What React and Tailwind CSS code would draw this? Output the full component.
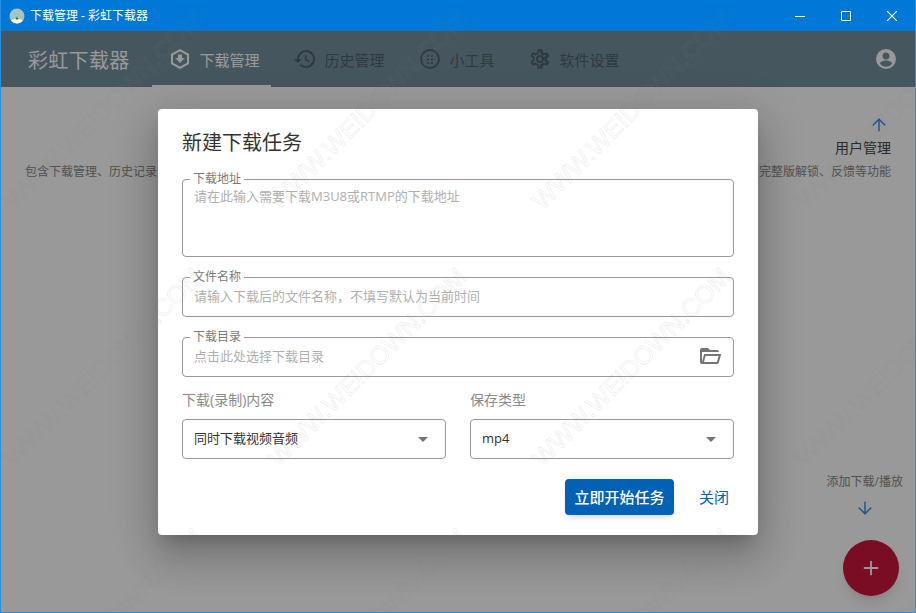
import React from "react";
import { ArrowUp, ArrowDown, Plus } from "lucide-react";

const FONT = "font-['Open_Sans','Noto_Sans_CJK_SC',sans-serif]";

// repeated site watermark, sits on top of the whole page
const marks = [];
[110, 367, 627].forEach((cy) => {
  [102, 366, 630, 894].forEach((cx) => marks.push([cx - 140, cy - 16]));
});

function TabItem({ icon, label, active }) {
  return (
    <div className={`relative flex h-14 items-center gap-2 pl-4 pr-[11px] ${active ? "text-white" : "text-[#4e626c]"}`}>
      {icon}
      <span className="pt-[2px] text-[15px]">{label}</span>
      {active && <div className="absolute bottom-0 left-0 h-[2px] w-full bg-white" />}
    </div>
  );
}

function OutlinedField({ label, placeholder, height, pad, children }) {
  return (
    <fieldset className={`rounded border border-[#999] px-[11px] ${height} ${pad}`}>
      <legend className="-ml-[4px] px-[3px] text-xs leading-none text-[#7a7a7a]">{label}</legend>
      <div className="flex h-5 items-center justify-between">
        <span className="text-[13px] leading-5 text-[#b0b0b0]">{placeholder}</span>
        {children}
      </div>
    </fieldset>
  );
}

function SelectBox({ label, value }) {
  return (
    <div className="flex-1">
      <div className="mb-[9px] text-sm leading-5 text-[#8a8a8a]">{label}</div>
      <div className="flex h-10 items-center justify-between rounded border border-[#999] pl-[11px] pr-[17px]">
        <span className="text-[13px] text-[#333]">{value}</span>
        <div className="h-0 w-0 border-x-[5px] border-t-[5px] border-x-transparent border-t-[#757575]" />
      </div>
    </div>
  );
}

export default function App() {
  return (
    <div className={`relative flex h-[613px] w-[916px] flex-col overflow-hidden border-x border-b border-[#2b8fe0] ${FONT}`}>
      {/* title bar */}
      <div className="flex h-[31px] shrink-0 items-center justify-between bg-[#0078d7] pl-2 text-white">
        <div className="flex items-center gap-[5px]">
          <svg width="16" height="16" viewBox="0 0 16 16">
            <circle cx="8" cy="8" r="7.5" fill="#a9c4bd" />
            <path d="M2 12.5a7.5 7.5 0 0 0 12 0c-1.5-1-3-1.5-6-1.5s-4.500.5-6 1.500z" fill="#fff" />
            <path d="M6.500 11.500 8 8.500l1.500 3z" fill="#3d5a50" />
          </svg>
          <span className="text-xs">下载管理 - 彩虹下载器</span>
        </div>
        <div className="flex items-center">
          <div className="flex h-[31px] w-[46px] items-center justify-center">
            <svg width="10" height="10" viewBox="0 0 10 10"><path d="M0 5.500h10" stroke="#fff" /></svg>
          </div>
          <div className="flex h-[31px] w-[46px] items-center justify-center">
            <svg width="10" height="10" viewBox="0 0 10 10"><path d="M.5.500h9v9h-9z" fill="none" stroke="#fff" /></svg>
          </div>
          <div className="flex h-[31px] w-[46px] items-center justify-center">
            <svg width="10" height="10" viewBox="0 0 10 10"><path d="M0 0l10 10M10 0 0 10" stroke="#fff" strokeWidth="1.1" /></svg>
          </div>
        </div>
      </div>

      {/* app header */}
      <div className="relative flex h-14 shrink-0 items-center justify-between bg-[#758f9d] shadow-md">
        <div className="flex items-center">
          <span className="ml-[27px] mr-[22px] pt-[3px] text-xl tracking-[0.3px] text-white">彩虹下载器</span>
          <div className="flex items-center gap-[6px]">
            <TabItem
              active
              label="下载管理"
              icon={
                <svg width="24" height="24" viewBox="0 0 24 24" fill="none">
                  <path d="M12 3.200 20 7.700v8.600l-8 4.500-8-4.500V7.700z" stroke="#fff" strokeWidth="2" />
                  <path d="M10 7.500h4v3.600h2.800L12 16l-4.800-4.900H10z" fill="#fff" />
                </svg>
              }
            />
            <TabItem
              label="历史管理"
              icon={
                <svg width="24" height="24" viewBox="0 0 24 24" fill="#4e626c">
                  <path d="M13 3a9 9 0 0 0-9 9H1l3.890 3.890.07.140L9 12H6a7 7 0 1 1 2.050 4.950l-1.420 1.420A9 9 0 1 0 13 3zm-1 5v5l4.280 2.540.720-1.210-3.500-2.080V8H12z" />
                </svg>
              }
            />
            <TabItem
              label="小工具"
              icon={
                <svg width="24" height="24" viewBox="0 0 24 24" fill="none">
                  <circle cx="12" cy="12" r="9" stroke="#4e626c" strokeWidth="1.8" />
                  <g fill="#4e626c">
                    <circle cx="10" cy="9" r="1.100" /><circle cx="14" cy="9" r="1.100" />
                    <circle cx="10" cy="12.500" r="1.100" /><circle cx="14" cy="12.500" r="1.100" />
                    <circle cx="10" cy="16" r="1.100" /><circle cx="14" cy="16" r="1.100" />
                  </g>
                </svg>
              }
            />
            <TabItem
              label="软件设置"
              icon={
                <svg width="24" height="24" viewBox="0 0 24 24" fill="#4e626c">
                  <path d="M19.140 12.940a7.300 7.300 0 0 0 0-1.880l2.030-1.580a.5.5 0 0 0 .12-.64l-1.920-3.320a.5.5 0 0 0-.6-.22l-2.390.96a7 7 0 0 0-1.620-.94l-.36-2.540a.5.5 0 0 0-.5-.42h-3.840a.5.5 0 0 0-.49.42l-.36 2.540c-.59.24-1.130.56-1.620.94l-2.390-.96a.5.5 0 0 0-.6.22L2.680 8.840a.5.5 0 0 0 .12.64l2.030 1.580a7.400 7.400 0 0 0 0 1.880L2.800 14.520a.5.5 0 0 0-.12.64l1.920 3.320c.12.22.37.29.6.22l2.390-.96c.5.38 1.030.7 1.620.94l.36 2.540c.05.24.24.42.49.42h3.840c.25 0 .45-.18.49-.42l.36-2.540c.59-.24 1.130-.56 1.620-.94l2.390.96c.22.08.47 0 .6-.22l1.920-3.320a.5.5 0 0 0-.12-.64zM12 19.500l-1.200-.02-.32-2.250-.96-.39c-.45-.18-.86-.43-1.270-.74l-.8-.62-2.120.85-.6-1.040 1.800-1.400-.13-1.020a6 6 0 0 1 0-1.740l.13-1.020-1.800-1.400.6-1.040 2.120.85.8-.62c.4-.3.82-.55 1.270-.74l.96-.39.32-2.250h1.200l.32 2.250.96.39c.45.18.86.43 1.270.74l.8.62 2.120-.85.6 1.040-1.800 1.400.13 1.020a6 6 0 0 1 0 1.740l-.13 1.020 1.800 1.400-.6 1.040-2.120-.85-.8.62c-.4.3-.82.55-1.270.74l-.96.39-.32 2.250zM12 8a4 4 0 1 0 0 8 4 4 0 0 0 0-8zm0 6a2 2 0 1 1 0-4 2 2 0 0 1 0 4z" />
                </svg>
              }
            />
          </div>
        </div>
        <svg className="mr-[17px]" width="24" height="24" viewBox="0 0 24 24" fill="#fff">
          <path d="M12 2a10 10 0 1 0 0 20 10 10 0 0 0 0-20zm0 3.500a3.500 3.500 0 1 1 0 7 3.500 3.500 0 0 1 0-7zm0 14.200a7.200 7.200 0 0 1-6-3.220c.03-2 4-3.080 6-3.080s5.970 1.090 6 3.080a7.200 7.200 0 0 1-6 3.220z" />
        </svg>
      </div>

      {/* page behind the dialog */}
      <div className="relative flex-1 bg-white">
        <p className="absolute left-6 top-[77px] text-xs text-[#888]">包含下载管理、历史记录</p>
        <div className="absolute right-6 top-[28px] flex flex-col items-end">
          <ArrowUp className="mr-[2px] text-[#3b8fe8]" size={20} strokeWidth={1.8} />
          <span className="mt-[3px] text-sm text-[#464646]">用户管理</span>
        </div>
        <p className="absolute right-6 top-[77px] text-xs text-[#888]">完整版解锁、反馈等功能</p>
        <div className="absolute bottom-[122px] right-3 text-xs text-[#888]">添加下载/播放</div>
        <ArrowDown className="absolute bottom-[94px] right-10 text-[#3b8fe8]" size={20} strokeWidth={1.8} />
        <div className="absolute bottom-4 right-4 flex h-14 w-14 items-center justify-center rounded-full bg-[#cc173c] text-white shadow-lg">
          <Plus size={22} strokeWidth={2} />
        </div>
      </div>

      {/* modal backdrop */}
      <div className="absolute inset-x-0 bottom-0 top-[31px] bg-black/40" />

      {/* dialog */}
      <div className="absolute left-[157px] top-[109px] w-[600px] rounded bg-white px-6 pb-5 pt-[21px] shadow-[0_11px_15px_-7px_rgba(0,0,0,0.2),0_24px_38px_3px_rgba(0,0,0,0.14),0_9px_46px_8px_rgba(0,0,0,0.12)]">
        <h2 className="text-xl leading-[26px] text-[#333]">新建下载任务</h2>
        <div className="mt-[17px] flex flex-col gap-[14px]">
          <OutlinedField label="下载地址" placeholder="请在此输入需要下载M3U8或RTMP的下载地址" height="h-[84px]" pad="pt-[1px]" />
          <OutlinedField label="文件名称" placeholder="请输入下载后的文件名称，不填写默认为当前时间" height="h-[46px]" pad="pt-[3px]" />
          <OutlinedField label="下载目录" placeholder="点击此处选择下载目录" height="h-[46px]" pad="pt-[3px]">
            <svg width="24" height="24" viewBox="0 0 24 24" fill="#757575">
              <path d="M6.100 10 4 18V8h17a2 2 0 0 0-2-2h-7l-2-2H4a2 2 0 0 0-2 2v12a2 2 0 0 0 2 2h15c.9 0 1.700-.6 1.900-1.500L23.200 10H6.100M19 18H6l1.600-6h13L19 18z" />
            </svg>
          </OutlinedField>
        </div>
        <div className="mt-[13px] flex gap-6">
          <SelectBox label="下载(录制)内容" value="同时下载视频音频" />
          <SelectBox label="保存类型" value="mp4" />
        </div>
        <div className="mt-5 flex items-center justify-end gap-5">
          <button className="h-9 w-[109px] rounded bg-[#0061b5] text-[15px] font-medium text-white shadow-md">立即开始任务</button>
          <button className="h-9 w-10 rounded text-[15px] text-[#0061b5]">关闭</button>
        </div>
      </div>

      {/* watermark */}
      {marks.map(([x, y], i) => (
        <span
          key={i}
          className="pointer-events-none absolute w-[280px] -rotate-45 text-center font-['Liberation_Sans',sans-serif] text-[25px] leading-8 whitespace-nowrap text-transparent [-webkit-text-stroke:1px_rgba(128,128,128,0.12)]"
          style={{ left: x, top: y }}
        >
          WWW.WEIDOWN.COM
        </span>
      ))}
    </div>
  );
}
